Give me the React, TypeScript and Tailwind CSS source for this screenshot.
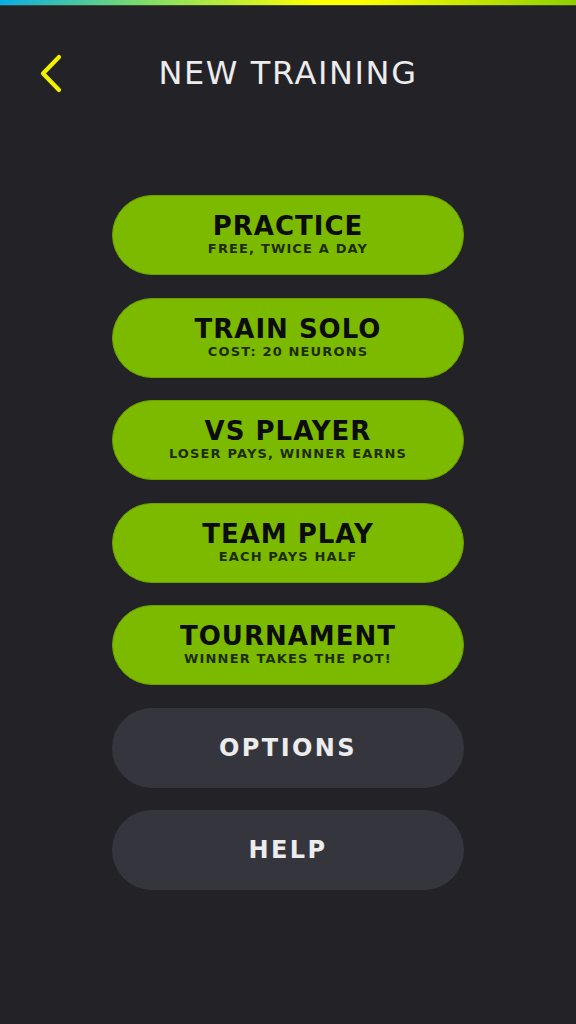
import React from "react";

const modes = [
  { title: "PRACTICE", sub: "FREE, TWICE A DAY" },
  { title: "TRAIN SOLO", sub: "COST: 20 NEURONS" },
  { title: "VS PLAYER", sub: "LOSER PAYS, WINNER EARNS" },
  { title: "TEAM PLAY", sub: "EACH PAYS HALF" },
  { title: "TOURNAMENT", sub: "WINNER TAKES THE POT!" },
];

const extras = ["OPTIONS", "HELP"];

export default function App() {
  return (
    <div
      className="w-[576px] h-[1024px] bg-[#232327] flex flex-col overflow-hidden"
      style={{ fontFamily: '"DejaVu Sans", "Open Sans", sans-serif' }}
    >
      <div className="h-[5px] bg-[linear-gradient(90deg,#08ade9_0%,#7fdc6a_25%,#ffff00_55%,#ffff00_62%,#8fcf00_100%)]" />
      <div className="h-[1px] bg-[#3a4a2a]" />

      <header className="relative h-[134px] flex items-center justify-center">
        <button className="absolute left-[37px] top-[48px] w-[28px] h-[40px] flex items-center justify-center">
          <svg width="26" height="40" viewBox="0 0 26 40" fill="none">
            <path d="M21 3 L5 19.5 L21 36" stroke="#f2f200" strokeWidth="4.2" strokeLinecap="round" strokeLinejoin="round" />
          </svg>
        </button>
        <h1 className="text-[32px] leading-[36px] text-[#ececec] tracking-[1.6px] mb-[1px]">NEW TRAINING</h1>
      </header>

      <div className="flex flex-col items-center gap-[22.5px] mt-[55px]">
        {modes.map((m) => (
          <div
            key={m.title}
            className="w-[352px] h-[80px] rounded-full bg-[#7cba00] border border-[#6aa000] flex flex-col items-center justify-center pb-[2px]"
          >
            <div className="text-[26px] leading-[30px] font-bold text-[#0c0c0c] tracking-[1px]">{m.title}</div>
            <div className="text-[13px] leading-[16px] font-bold text-[#1e2c04] tracking-[1.15px]">{m.sub}</div>
          </div>
        ))}
        {extras.map((e) => (
          <div
            key={e}
            className="w-[352px] h-[80px] rounded-full bg-[#35353d] flex items-center justify-center"
          >
            <div className="text-[24px] font-bold text-[#ececec] tracking-[2.4px]">{e}</div>
          </div>
        ))}
      </div>
    </div>
  );
}
